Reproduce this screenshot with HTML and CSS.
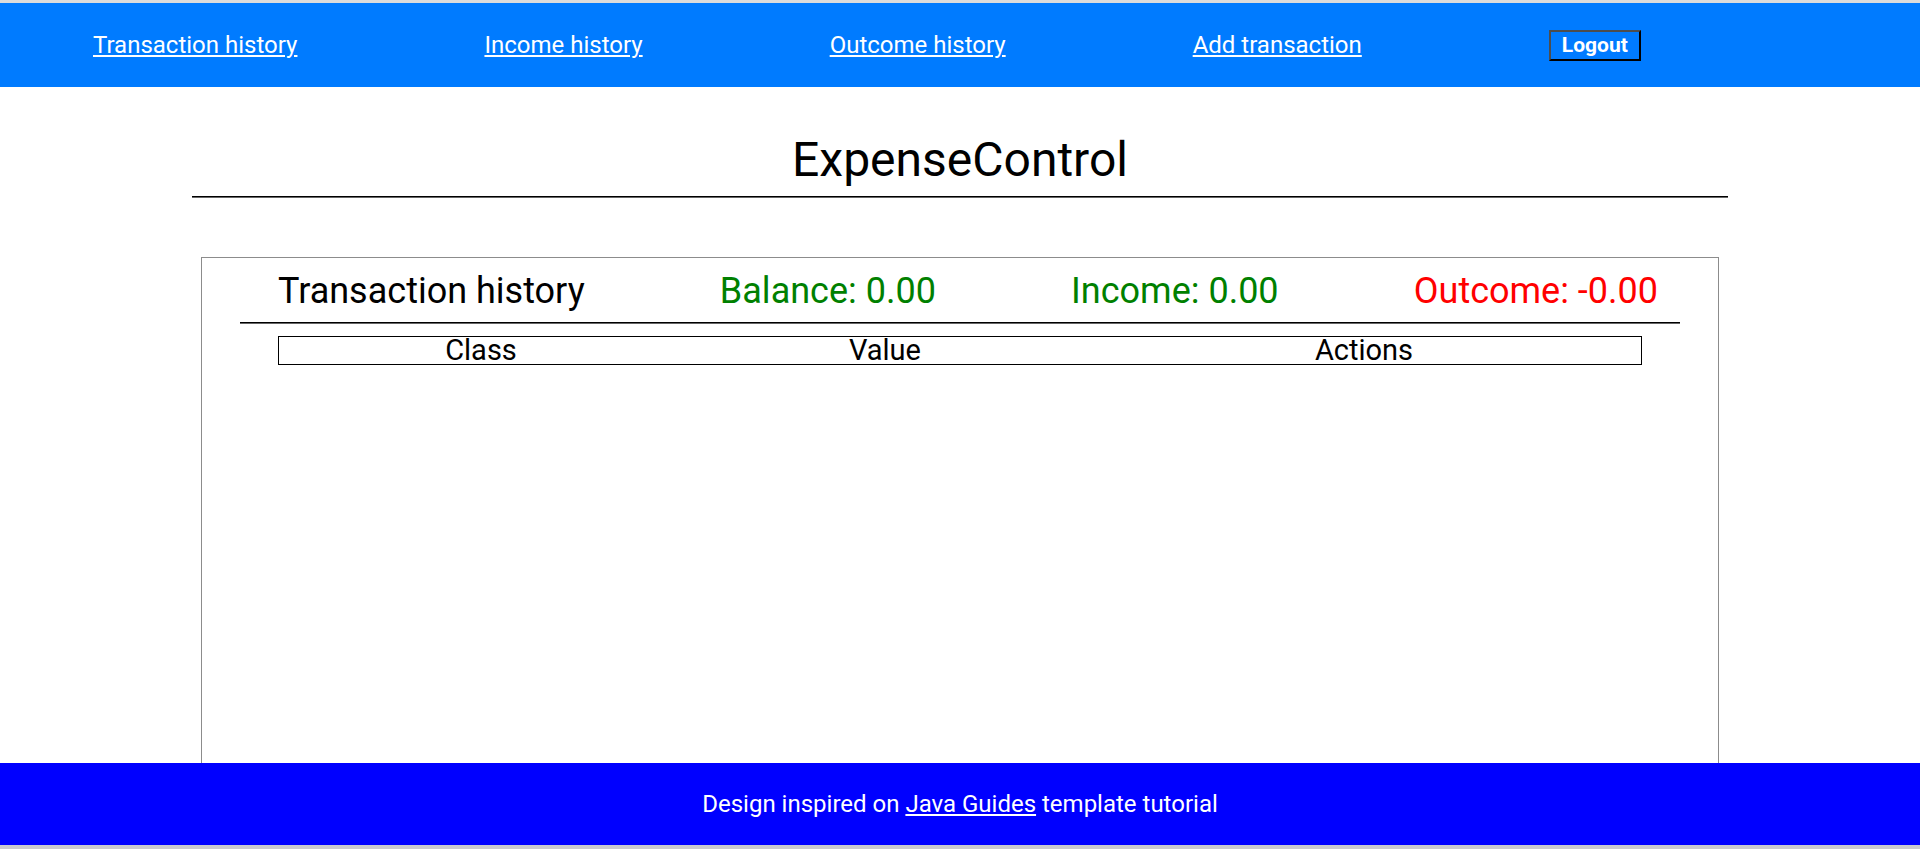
FILE: index.html
```html
<!DOCTYPE html>
<html lang="en">
<head>
<meta charset="utf-8">
<title>ExpenseControl</title>
<link rel="stylesheet" href="styles.css">
</head>
<body>
<div class="page">
  <div class="top-strip"></div>
  <header class="navbar">
    <a class="nav-link" href="#">Transaction history</a>
    <a class="nav-link" href="#">Income history</a>
    <a class="nav-link" href="#">Outcome history</a>
    <a class="nav-link" href="#">Add transaction</a>
    <button class="logout" type="button">Logout</button>
  </header>
  <main class="main">
    <h1 class="title">ExpenseControl</h1>
    <hr class="title-rule">
    <section class="card">
      <div class="card-head">
        <h2 class="card-title">Transaction history</h2>
        <span class="stat positive">Balance: 0.00</span>
        <span class="stat positive">Income: 0.00</span>
        <span class="stat negative">Outcome: -0.00</span>
      </div>
      <hr class="card-rule">
      <table class="tx-table">
        <thead>
          <tr>
            <th class="col-class">Class</th>
            <th class="col-value">Value</th>
            <th class="col-actions">Actions</th>
          </tr>
        </thead>
        <tbody></tbody>
      </table>
    </section>
  </main>
  <footer class="footer">
    <p class="footer-text">Design inspired on <a class="footer-link" href="#">Java Guides</a> template tutorial</p>
  </footer>
  <div class="bottom-strip"></div>
</div>
</body>
</html>
```

FILE: styles.css
```css
html, body {
  margin: 0;
  padding: 0;
  height: 100%;
}

body {
  font-family: Roboto, "Noto Sans", sans-serif;
  color: #000;
  background: #fff;
}

.page {
  display: flex;
  flex-direction: column;
  height: 100vh;
  overflow: hidden;
}

.top-strip {
  height: 3px;
  flex: 0 0 3px;
  background: #dcdcdc;
}

.navbar {
  flex: 0 0 84px;
  height: 84px;
  background: #007bff;
  display: flex;
  align-items: center;
  padding-left: 93px;
  gap: 187px;
  box-sizing: border-box;
}

.nav-link {
  color: #fff;
  font-size: 24px;
  font-weight: 400;
  text-decoration: underline;
  line-height: normal;
}

.logout {
  font-family: Roboto, "Noto Sans", sans-serif;
  font-size: 21px;
  font-weight: 700;
  line-height: 25px;
  color: #fff;
  background: #007bff;
  padding: 1px 11px;
  margin: 0;
  border-width: 2px;
  border-style: solid;
  border-color: #4d4d4d #000 #000 #4d4d4d;
}

.main {
  flex: 1 1 auto;
  overflow: hidden;
  min-height: 0;
}

.title {
  margin: 44px 0 0;
  font-size: 48px;
  font-weight: 400;
  line-height: normal;
  text-align: center;
}

.title-rule {
  width: 80%;
  margin: 8px auto 0;
  border: 0;
  border-top: 1px solid #000;
  border-bottom: 1px solid #666;
  height: 0;
}

.card {
  margin: 59px 201px 0;
  border: 1px solid #8c8c8c;
  height: 700px;
  box-sizing: border-box;
}

.card-head {
  display: flex;
  justify-content: space-between;
  align-items: baseline;
  padding: 12px 60px 0 76px;
}

.card-title {
  margin: 0;
  font-size: 36px;
  font-weight: 400;
  line-height: normal;
}

.stat {
  font-size: 36px;
  font-weight: 400;
  line-height: normal;
}

.positive {
  color: #008000;
}

.negative {
  color: #ff0000;
}

.card-rule {
  width: 95%;
  margin: 10px auto 0;
  border: 0;
  border-top: 1px solid #000;
  border-bottom: 1px solid #666;
  height: 0;
}

.tx-table {
  width: 90%;
  margin: 12px auto 0;
  border: 1px solid #000;
  border-collapse: collapse;
}

.tx-table th {
  font-size: 29px;
  font-weight: 400;
  line-height: 27px;
  padding: 0;
  text-align: center;
}

.col-class {
  width: 29.7%;
}

.col-value {
  width: 29.6%;
}

.footer {
  flex: 0 0 82px;
  height: 82px;
  background: #0000ff;
  display: flex;
  align-items: center;
  justify-content: center;
}

.footer-text {
  margin: 0;
  color: #fff;
  font-size: 24px;
  line-height: normal;
}

.footer-link {
  color: #fff;
  text-decoration: underline;
}

.bottom-strip {
  flex: 0 0 4px;
  height: 4px;
  background: #c8c8d0;
}
```
